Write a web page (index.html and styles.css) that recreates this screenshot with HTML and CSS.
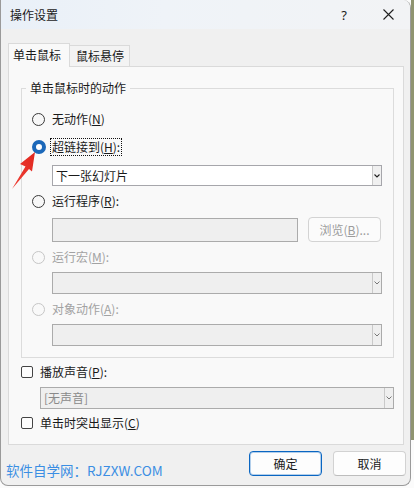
FILE: index.html
```html
<!DOCTYPE html>
<html lang="zh-CN">
<head>
<meta charset="utf-8">
<title>操作设置</title>
<link rel="stylesheet" href="styles.css">
</head>
<body>
<div class="win">
  <div class="titlebar">
    <span class="title">操作设置</span>
    <span class="cap help">?</span>
    <span class="cap close"><svg width="11" height="11" viewBox="0 0 11 11"><path d="M0.5 0.5 L10.5 10.5 M10.5 0.5 L0.5 10.5" stroke="#1f1f1f" stroke-width="1.1" fill="none"/></svg></span>
  </div>
  <div class="content">
    <div class="tabs">
      <div class="tab sel">单击鼠标</div>
      <div class="tab">鼠标悬停</div>
    </div>
    <div class="panel">
      <fieldset class="group">
        <legend>单击鼠标时的动作</legend>
        <div class="row r1"><span class="radio"></span><span>无动作(<u>N</u>)</span></div>
        <div class="row r2"><span class="radio on"></span><span class="focus">超链接到(<u>H</u>):</span></div>
        <div class="combo c1"><span class="val">下一张幻灯片</span><span class="drop"><svg width="6" height="4" viewBox="0 0 6 4"><path d="M0.5 0.5 L3 3 L5.5 0.5" stroke="#222" stroke-width="1.1" fill="none"/></svg></span></div>
        <div class="row r3"><span class="radio"></span><span>运行程序(<u>R</u>):</span></div>
        <div class="prog">
          <div class="input"></div>
          <div class="browse">浏览(<u>B</u>)...</div>
        </div>
        <div class="row r3 dis"><span class="radio"></span><span>运行宏(<u>M</u>):</span></div>
        <div class="combo c2 dis"><span class="val"></span><span class="drop"><svg width="6" height="4" viewBox="0 0 6 4"><path d="M0.5 0.5 L3 3 L5.5 0.5" stroke="#777" stroke-width="1" fill="none"/></svg></span></div>
        <div class="row r3 dis"><span class="radio"></span><span>对象动作(<u>A</u>):</span></div>
        <div class="combo c2 dis"><span class="val"></span><span class="drop"><svg width="6" height="4" viewBox="0 0 6 4"><path d="M0.5 0.5 L3 3 L5.5 0.5" stroke="#777" stroke-width="1" fill="none"/></svg></span></div>
      </fieldset>
      <div class="row chk1"><span class="check"></span><span>播放声音(<u>P</u>):</span></div>
      <div class="combo c3 dis"><span class="val">[无声音]</span><span class="drop"><svg width="6" height="4" viewBox="0 0 6 4"><path d="M0.5 0.5 L3 3 L5.5 0.5" stroke="#777" stroke-width="1" fill="none"/></svg></span></div>
      <div class="row chk2"><span class="check"></span><span>单击时突出显示(<u>C</u>)</span></div>
    </div>
    <div class="footer">
      <span class="site">软件自学网：RJZXW.COM</span>
      <div class="buttons">
        <div class="btn ok">确定</div>
        <div class="btn">取消</div>
      </div>
    </div>
  </div>
  <svg class="arrow" width="40" height="44" viewBox="0 0 40 44">
    <defs><linearGradient id="ag" x1="0" y1="1" x2="1" y2="0"><stop offset="0" stop-color="#f0443a"/><stop offset="1" stop-color="#e0261e"/></linearGradient></defs>
    <polygon points="34,3 19,15 24.5,17.5 11,40 28,20 31,22.5" fill="url(#ag)"/>
  </svg>
</div>
</body>
</html>
```
FILE: styles.css
```css
* { box-sizing: border-box; }
body {
  margin: 0;
  background: linear-gradient(#8f9470, #8f9470) no-repeat 411px 0 / 3px 440px, #fbfbfb;
  font-family: "Noto Sans CJK SC", "Noto Sans", sans-serif;
  font-size: 12px;
  color: #1a1a1a;
}
.win {
  position: relative;
  width: 411px;
  height: 486px;
  background: #f0f0f0;
  border: 1px solid #9a9a9a;
  border-top: none;
  border-radius: 0 8px 8px 8px;
  overflow: hidden;
}
.titlebar {
  height: 29px;
  display: flex;
  align-items: center;
  padding-left: 9px;
  background: linear-gradient(90deg, #e9f0f8 0%, #eff3f8 40%, #f2f3f5 100%);
}
.title { font-size: 12px; color: #1b1b1b; }
.cap { width: 44px; text-align: center; display: flex; justify-content: center; align-items: center; }
.help { margin-left: auto; font-size: 13px; font-family: "Noto Sans", sans-serif; }
.close { margin-right: 0; }
.content { padding: 14px 6px 0 7px; }
.tabs { display: flex; align-items: flex-end; height: 23px; }
.tab {
  height: 21px;
  width: 60px;
  border: 1px solid #dadada;
  border-left: none;
  border-bottom: none;
  background: #f3f3f3;
  line-height: 20px;
  text-align: center;
  padding-left: 1px;
}
.tab.sel {
  height: 24px;
  width: 62px;
  border-left: 1px solid #dadada;
  background: #f9f9f9;
  text-align: left;
  padding-left: 4px;
  line-height: 22px;
  margin-bottom: -1px;
  position: relative;
  z-index: 1;
}
.panel {
  height: 379px;
  border: 1px solid #dadada;
  background: #f9f9f9;
  padding: 12px 0 0 12px;
}
.group {
  width: 373px;
  margin: 0;
  padding: 0 0 11px 0;
  border: 1px solid #dcdcdc;
  min-width: 0;
}
.group legend {
  margin-left: 4px;
  padding: 0 4px;
  line-height: 18px;
  font-size: 12px;
}
.row { display: flex; align-items: center; height: 20px; line-height: 20px; padding-left: 10px; }
.r1 { margin-top: 12px; }
.r2 { margin-top: 8px; }
.r3 { margin-top: 5px; }
.radio {
  width: 13px; height: 13px;
  border-radius: 50%;
  border: 1px solid #3a3a3a;
  background: #f7f7f7;
  margin-right: 7px;
  flex: none;
}
.radio.on {
  width: 14px; height: 14px;
  border: 4px solid #1c68b9;
  background: #fff;
  margin-right: 4px;
}
.focus {
  border: 1px dotted #111;
  padding: 0 1px;
  line-height: 16px;
  height: 18px;
}
.dis { color: #a2a2a2; }
.dis .radio { border-color: #c6c6c6; background: #f9f9f9; }
.combo {
  display: flex;
  border: 1px solid #a6a6ab;
  background: #fff;
}
.combo .val { flex: 1; padding-left: 3px; line-height: 19px; }
.combo .drop {
  width: 9px;
  border-left: 1px solid #c9c9c9;
  background: #f0f0f0;
  display: flex; align-items: center; justify-content: center;
}
.combo.dis { background: #efefef; border-color: #ababab; }
.combo.dis .drop { background: #efefef; }
.c1 { margin: 8px 0 0 30px; width: 330px; height: 21px; }
.c2 { margin: 5px 0 0 30px; width: 330px; height: 22px; }
.prog { display: flex; align-items: center; margin: 6px 0 0 30px; height: 25px; }
.input { width: 246px; height: 24px; border: 1px solid #ababab; background: #efefef; }
.browse {
  margin-left: 10px;
  width: 73px; height: 25px;
  border: 1px solid #d3d3d3;
  border-radius: 4px;
  background: #fbfbfb;
  color: #9c9c9c;
  text-align: center;
  line-height: 23px;
}
.check {
  width: 12px; height: 12px;
  border: 1px solid #444;
  border-radius: 2px;
  background: #fdfdfd;
  margin-right: 7px;
  flex: none;
}
.chk1 { padding-left: 0; margin-top: 4px; }
.chk2 { padding-left: 0; margin-top: 4px; }
.c3 { margin: 5px 0 0 19px; width: 354px; height: 22px; }
.c3 .val { color: #8a8a8a; line-height: 20px; }
.footer { display: flex; justify-content: space-between; align-items: flex-start; margin-right: -2px; }
.site {
  margin: 15px 0 0 -2px;
  color: #3b8ee3;
  font-size: 13.5px;
  line-height: 20px;
}
.buttons { display: flex; gap: 11px; margin-top: 6px; }
.btn {
  width: 73px; height: 25px;
  border: 1px solid #d2d2d2;
  border-bottom-color: #bdbdbd;
  border-radius: 4px;
  background: #fdfdfd;
  text-align: center;
  line-height: 23px;
}
.btn.ok {
  border: 1px solid #0a66c2;
  box-shadow: inset 0 0 0 1px rgba(10, 102, 194, 0.3);
}
.arrow { position: absolute; left: 0; top: 149px; }
```
